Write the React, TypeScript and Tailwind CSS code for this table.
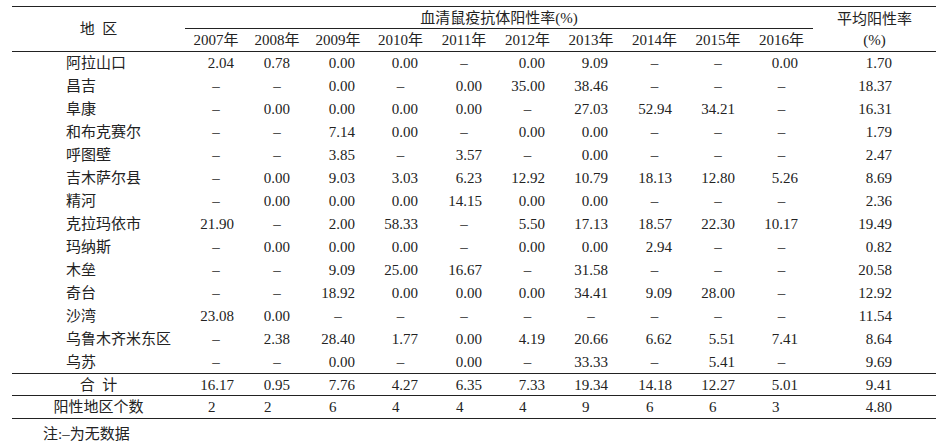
import React from 'react';

const D = '–';

// width of each year column and the right padding that lines up the decimals
const yearCols = [
  { year: '2007', w: 'w-[62px]', pr: 'pr-[13px]' },
  { year: '2008', w: 'w-[60px]', pr: 'pr-[17px]' },
  { year: '2009', w: 'w-[62px]', pr: 'pr-[14px]' },
  { year: '2010', w: 'w-[63px]', pr: 'pr-[14px]' },
  { year: '2011', w: 'w-[64px]', pr: 'pr-[14px]' },
  { year: '2012', w: 'w-[63px]', pr: 'pr-[14px]' },
  { year: '2013', w: 'w-[64px]', pr: 'pr-[15px]' },
  { year: '2014', w: 'w-[63px]', pr: 'pr-[14px]' },
  { year: '2015', w: 'w-[64px]', pr: 'pr-[15px]' },
  { year: '2016', w: 'w-[63px]', pr: 'pr-[15px]' },
];
const avgPr = 'pr-[44px]';

const rows: { name: string; values: string[]; avg: string }[] = [
  { name: '阿拉山口', values: ['2.04', '0.78', '0.00', '0.00', D, '0.00', '9.09', D, D, '0.00'], avg: '1.70' },
  { name: '昌吉', values: [D, D, '0.00', D, '0.00', '35.00', '38.46', D, D, D], avg: '18.37' },
  { name: '阜康', values: [D, '0.00', '0.00', '0.00', '0.00', D, '27.03', '52.94', '34.21', D], avg: '16.31' },
  { name: '和布克赛尔', values: [D, D, '7.14', '0.00', D, '0.00', '0.00', D, D, D], avg: '1.79' },
  { name: '呼图壁', values: [D, D, '3.85', D, '3.57', D, '0.00', D, D, D], avg: '2.47' },
  { name: '吉木萨尔县', values: [D, '0.00', '9.03', '3.03', '6.23', '12.92', '10.79', '18.13', '12.80', '5.26'], avg: '8.69' },
  { name: '精河', values: [D, '0.00', '0.00', '0.00', '14.15', '0.00', '0.00', D, D, D], avg: '2.36' },
  { name: '克拉玛依市', values: ['21.90', D, '2.00', '58.33', D, '5.50', '17.13', '18.57', '22.30', '10.17'], avg: '19.49' },
  { name: '玛纳斯', values: [D, '0.00', '0.00', '0.00', D, '0.00', '0.00', '2.94', D, D], avg: '0.82' },
  { name: '木垒', values: [D, D, '9.09', '25.00', '16.67', D, '31.58', D, D, D], avg: '20.58' },
  { name: '奇台', values: [D, D, '18.92', '0.00', '0.00', '0.00', '34.41', '9.09', '28.00', D], avg: '12.92' },
  { name: '沙湾', values: ['23.08', '0.00', D, D, D, D, D, D, D, D], avg: '11.54' },
  { name: '乌鲁木齐米东区', values: [D, '2.38', '28.40', '1.77', '0.00', '4.19', '20.66', '6.62', '5.51', '7.41'], avg: '8.64' },
  { name: '乌苏', values: [D, D, '0.00', D, '0.00', D, '33.33', D, '5.41', D], avg: '9.69' },
];

const total = ['16.17', '0.95', '7.76', '4.27', '6.35', '7.33', '19.34', '14.18', '12.27', '5.01'];
const counts = ['2', '2', '6', '4', '4', '4', '9', '6', '6', '3'];

const line = 'border-[#222]';

const ValueCell = ({ v, pr, count = false }: { v: string; pr: string; count?: boolean }) => {
  if (v === D) {
    return <td className="p-0 text-center">{D}</td>;
  }
  return (
    <td className={`p-0 text-right ${pr}`}>
      {count ? <span className="inline-block w-[26px] text-left">{v}</span> : v}
    </td>
  );
};

export default function App() {
  return (
    <div className="bg-white w-[943px] h-[442px] pt-[6px] pl-[12px] text-[15px] leading-[18px] text-[#222] font-['Liberation_Serif','Noto_Sans_CJK_SC',serif]">
      <table className="table-fixed border-collapse w-[924px]">
        <colgroup>
          <col className="w-[173px]" />
          {yearCols.map((c) => (
            <col key={c.year} className={c.w} />
          ))}
          <col className="w-[123px]" />
        </colgroup>
        <thead>
          <tr className={`h-[22px] border-t ${line}`}>
            <th rowSpan={2} className="p-0 font-normal text-center align-middle">
              地{'\u2002'}区
            </th>
            <th colSpan={10} className={`p-0 font-normal text-center border-b ${line}`}>
              血清鼠疫抗体阳性率(%)
            </th>
            <th className="p-0 pt-[3px] font-normal text-center">平均阳性率</th>
          </tr>
          <tr className={`h-[23px] border-b ${line}`}>
            {yearCols.map((c) => (
              <th key={c.year} className="p-0 font-normal text-center">
                {c.year}年
              </th>
            ))}
            <th className="p-0 font-normal text-center">(%)</th>
          </tr>
        </thead>
        <tbody>
          {rows.map((r) => (
            <tr key={r.name} className="h-[23px]">
              <td className="p-0 pl-[54px] text-left">{r.name}</td>
              {r.values.map((v, i) => (
                <ValueCell key={i} v={v} pr={yearCols[i].pr} />
              ))}
              <ValueCell v={r.avg} pr={avgPr} />
            </tr>
          ))}
          <tr className={`h-[22px] border-t ${line}`}>
            <td className="p-0 text-center">合{'\u2002'}计</td>
            {total.map((v, i) => (
              <ValueCell key={i} v={v} pr={yearCols[i].pr} />
            ))}
            <ValueCell v="9.41" pr={avgPr} />
          </tr>
          <tr className={`h-[23px] border-t border-b ${line}`}>
            <td className="p-0 text-center">阳性地区个数</td>
            {counts.map((v, i) => (
              <ValueCell key={i} v={v} pr={yearCols[i].pr} count />
            ))}
            <ValueCell v="4.80" pr={avgPr} />
          </tr>
        </tbody>
      </table>
      <p className="mt-[6px] pl-[31px]">注:–为无数据</p>
    </div>
  );
}
